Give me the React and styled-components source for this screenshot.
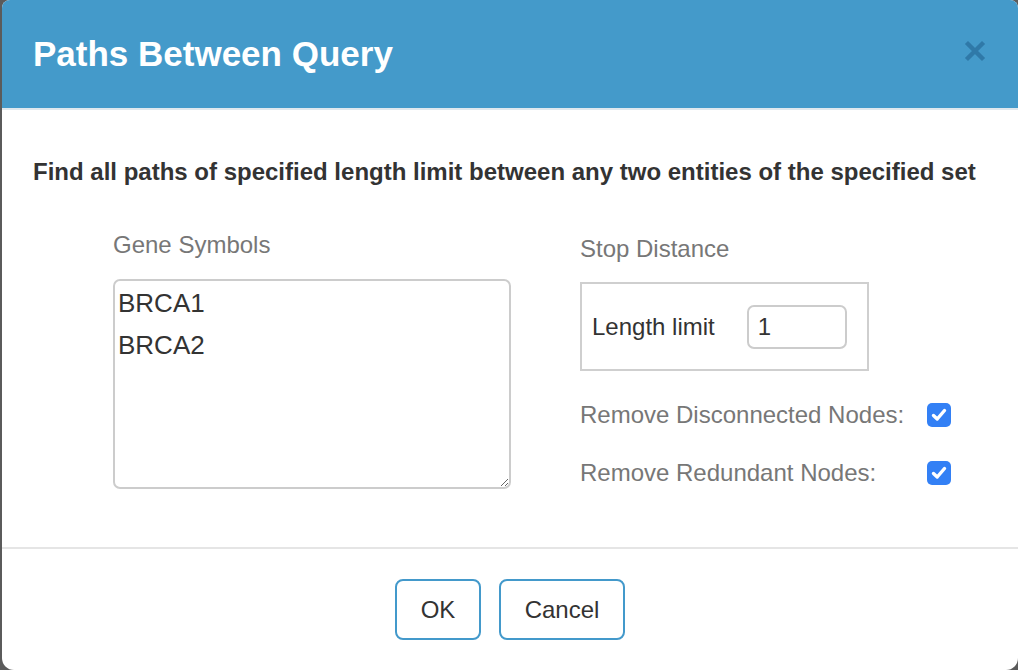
import React from "react";
import styled, { createGlobalStyle } from "styled-components";

const Global = createGlobalStyle`
  html, body { margin: 0; padding: 0; }
  body {
    background: #5b5b5b;
    font-family: "Liberation Sans", Arial, sans-serif;
    overflow: hidden;
  }
`;

const Dialog = styled.div`
  margin-left: 2px;
  width: 1016px;
  height: 670px;
  background: #fff;
  border-radius: 8px 8px 12px 12px;
  overflow: hidden;
  display: flex;
  flex-direction: column;
`;

const Header = styled.div`
  height: 108px;
  flex: none;
  background: #449aca;
  border-bottom: 2px solid #dfe8ee;
  display: flex;
  align-items: center;
  justify-content: space-between;
  padding: 0 31px 0 31px;
`;

const Title = styled.h1`
  margin: 0;
  color: #fff;
  font-size: 35px;
  font-weight: 700;
  line-height: 40px;
  padding-top: 0px;
`;

const Close = styled.button`
  border: none;
  background: none;
  padding: 0;
  width: 24px;
  height: 24px;
  display: flex;
  align-items: center;
  justify-content: center;
  cursor: pointer;
  margin-top: -6px;
`;

const Body = styled.div`
  padding: 47px 31px 0 31px;
  flex: 1;
`;

const Description = styled.p`
  margin: 0;
  font-size: 24px;
  font-weight: 700;
  color: #333;
  line-height: 30px;
`;

const Columns = styled.div`
  display: flex;
  padding-left: 80px;
  margin-top: 43px;
  gap: 69px;
`;

const LeftCol = styled.div`
  width: 398px;
  display: flex;
  flex-direction: column;
`;

const RightCol = styled.div`
  display: flex;
  flex-direction: column;
  padding-top: 4px;
`;

const Label = styled.div`
  font-size: 24px;
  color: #777;
  line-height: 30px;
`;

const TextArea = styled.textarea`
  margin-top: 19px;
  width: 398px;
  height: 210px;
  box-sizing: border-box;
  border: 2px solid #cccccc;
  border-radius: 7px;
  padding: 1px 3px;
  font-family: "Liberation Sans", Arial, sans-serif;
  font-size: 26px;
  line-height: 42px;
  color: #333;
  resize: both;
  outline: none;
`;

const Fieldset = styled.div`
  margin-top: 18px;
  width: 289px;
  height: 89px;
  box-sizing: border-box;
  border: 2px solid #cfcfcf;
  display: flex;
  align-items: center;
  padding: 0 0 0 10px;
  gap: 32px;
`;

const FieldLabel = styled.span`
  font-size: 24px;
  color: #333;
`;

const NumberInput = styled.input`
  width: 100px;
  height: 44px;
  box-sizing: border-box;
  border: 2px solid #cccccc;
  border-radius: 7px;
  padding: 0 9px;
  font-family: "Liberation Sans", Arial, sans-serif;
  font-size: 24px;
  color: #333;
  outline: none;
`;

const OptionRow = styled.label`
  display: grid;
  grid-template-columns: 347px 24px;
  align-items: center;
  margin-top: ${(p) => p.$top}px;
`;

const Check = styled.span`
  width: 24px;
  height: 24px;
  border-radius: 5px;
  background: #3380f5;
  display: flex;
  align-items: center;
  justify-content: center;
`;

const Footer = styled.div`
  flex: none;
  height: 123px;
  box-sizing: border-box;
  border-top: 2px solid #e5e5e5;
  display: flex;
  justify-content: center;
  align-items: flex-start;
  padding-top: 30px;
  gap: 18px;
`;

const Button = styled.button`
  height: 61px;
  min-width: ${(p) => p.$w}px;
  box-sizing: border-box;
  background: #fff;
  border: 2px solid #4399cb;
  border-radius: 8px;
  font-family: "Liberation Sans", Arial, sans-serif;
  font-size: 24px;
  color: #333;
  cursor: pointer;
  padding: 0;
`;

const CheckMark = () => (
  <svg width="16" height="14" viewBox="0 0 16 14">
    <path d="M2.5 7.5 L6.2 11 L13.5 2.5" fill="none" stroke="#fff" strokeWidth="3.4" strokeLinecap="round" strokeLinejoin="round" />
  </svg>
);

export default function App() {
  return (
    <>
      <Global />
      <Dialog>
        <Header>
          <Title>Paths Between Query</Title>
          <Close aria-label="close">
            <svg width="22" height="22" viewBox="0 0 22 22">
              <path d="M4 4 L18 18 M18 4 L4 18" stroke="#2f79a8" strokeWidth="4.4" strokeLinecap="square" />
            </svg>
          </Close>
        </Header>
        <Body>
          <Description>
            Find all paths of specified length limit between any two entities of the specified set
          </Description>
          <Columns>
            <LeftCol>
              <Label>Gene Symbols</Label>
              <TextArea defaultValue={"BRCA1\nBRCA2"} />
            </LeftCol>
            <RightCol>
              <Label>Stop Distance</Label>
              <Fieldset>
                <FieldLabel>Length limit</FieldLabel>
                <NumberInput defaultValue="1" />
              </Fieldset>
              <OptionRow $top={29}>
                <Label>Remove Disconnected Nodes:</Label>
                <Check><CheckMark /></Check>
              </OptionRow>
              <OptionRow $top={28}>
                <Label>Remove Redundant Nodes:</Label>
                <Check><CheckMark /></Check>
              </OptionRow>
            </RightCol>
          </Columns>
        </Body>
        <Footer>
          <Button $w={86}>OK</Button>
          <Button $w={126}>Cancel</Button>
        </Footer>
      </Dialog>
    </>
  );
}
